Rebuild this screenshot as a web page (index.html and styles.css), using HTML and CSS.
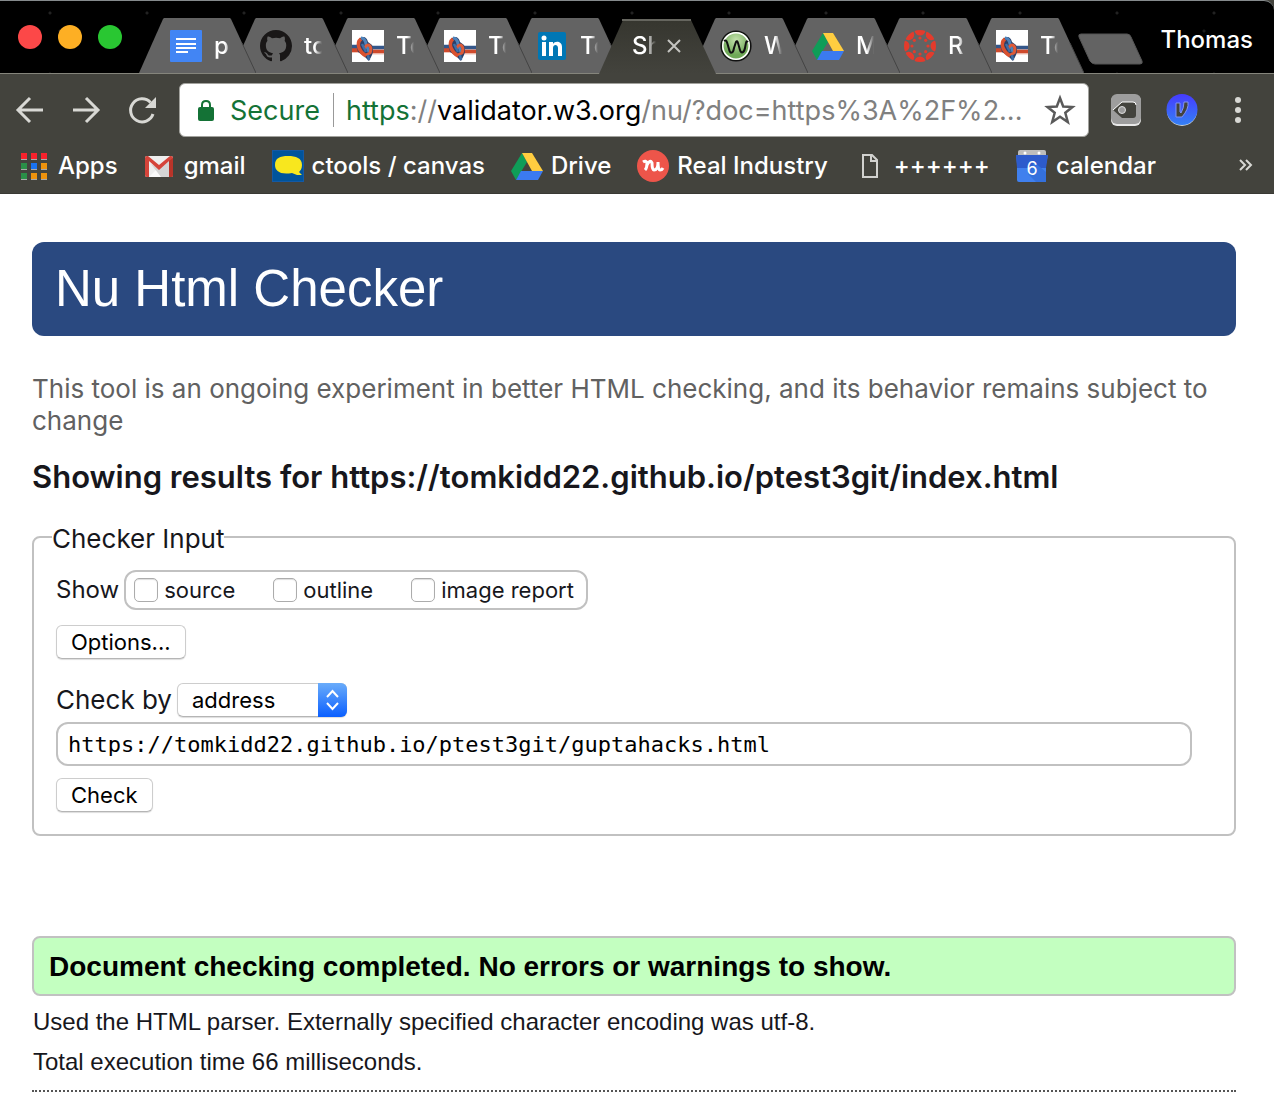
FILE: index.html
```html
<!DOCTYPE html>
<html lang="en">
<head>
<meta charset="utf-8">
<title>Showing results - Nu Html Checker</title>
<link rel="stylesheet" href="styles.css">
</head>
<body>
<svg class="defs" aria-hidden="true">
  <symbol id="tab-shape" viewBox="0 0 117 55"><path d="M0 55 24 1 25 0H91L92 1 117 55Z" fill="#636363"/><path d="M103 25 117 55" stroke="#444" fill="none"/></symbol>
  <symbol id="knot" viewBox="0 0 32 32">
    <rect width="32" height="32" fill="#fff"/>
    <path d="M0 20H10M17 21.500H32" stroke="#cf4a2c" stroke-width="4"/>
    <path d="M0 16.500H10M17 17.500H32" stroke="#34578a" stroke-width="3.500"/>
    <path d="M0 22.500H8M20 24H32" stroke="#f2c4b8" stroke-width="1"/>
    <path d="M8 8Q14 5 16 12L20 15Q22 20 20 25L17 31 12 26 6 22Q3 14 8 8Z" fill="#2c3f68"/>
    <path d="M9 9Q5 12 7 18 9 23 14 26" stroke="#d9512f" stroke-width="3.500" fill="none"/>
    <path d="M9 8Q13 8 14 14L17 22" stroke="#4d82ba" stroke-width="3" fill="none"/>
    <path d="M12 19Q15 13 18 16 20 19 18 23L14 25" stroke="#de5a38" stroke-width="3" fill="none"/>
    <path d="M10 14 14 22M16 25 17 30" stroke="#3d6ea6" stroke-width="2.500" fill="none"/>
  </symbol>
  <symbol id="drive" viewBox="0 0 32 32">
    <path d="M11 3 0 21 5 30 16 12Z" fill="#0f9d58"/>
    <path d="M11 3H21L32 21H21Z" fill="#ffcd40"/>
    <path d="M10 21H32L27 30H5Z" fill="#3b7af0"/>
  </symbol>
</svg>
<header class="browser">
  <div class="titlebar">
    <div class="lights">
      <button class="light red" aria-label="Close"></button>
      <button class="light amber" aria-label="Minimize"></button>
      <button class="light green" aria-label="Zoom"></button>
    </div>
    <nav class="tabs" aria-label="Tabs">
      <a class="tab" href="#"><svg class="shape"><use href="#tab-shape"/></svg>
        <svg class="icon" viewBox="0 0 32 32"><rect width="32" height="32" rx="1" fill="#4285f4"/><path d="M6 9H26M6 14H26M6 18H26M6 22H18" stroke="#fff" stroke-width="2"/></svg>
        <span class="label">p</span></a>
      <a class="tab" href="#"><svg class="shape"><use href="#tab-shape"/></svg>
        <svg class="icon" viewBox="0 0 16 16"><path fill="#191717" d="M8 0C3.580 0 0 3.580 0 8c0 3.540 2.290 6.530 5.470 7.590.4.070.55-.17.55-.38 0-.19-.01-.82-.01-1.490-2.010.37-2.530-.49-2.690-.94-.09-.23-.48-.94-.82-1.130-.28-.15-.68-.52-.01-.53.63-.01 1.080.58 1.230.82.72 1.210 1.870.87 2.330.66.070-.52.28-.87.51-1.070-1.780-.2-3.640-.89-3.640-3.950 0-.87.31-1.590.82-2.150-.08-.2-.36-1.020.08-2.120 0 0 .67-.21 2.200.82.64-.18 1.320-.27 2-.27s1.360.09 2 .27c1.530-1.040 2.200-.82 2.200-.82.44 1.100.16 1.920.08 2.120.51.56.82 1.270.82 2.150 0 3.070-1.870 3.750-3.650 3.950.29.25.54.73.54 1.480 0 1.070-.01 1.930-.01 2.200 0 .21.15.46.55.38A8 8 0 0 0 16 8c0-4.420-3.580-8-8-8z"/></svg>
        <span class="label">to</span></a>
      <a class="tab" href="#"><svg class="shape"><use href="#tab-shape"/></svg>
        <svg class="icon"><use href="#knot"/></svg><span class="label">To</span></a>
      <a class="tab" href="#"><svg class="shape"><use href="#tab-shape"/></svg>
        <svg class="icon"><use href="#knot"/></svg><span class="label">To</span></a>
      <a class="tab" href="#"><svg class="shape"><use href="#tab-shape"/></svg>
        <svg class="icon" viewBox="0 0 32 32"><rect x="2" y="2" width="28" height="28" rx="2" fill="#0077b5"/><circle cx="8" cy="8" r="2.500" fill="#fff"/><path d="M6 12H10V26H6ZM13 12H17V14C19 10.500 26 11 26 17V26H22V18C22 14 17 14 17 18V26H13Z" fill="#fff"/></svg>
        <span class="label">To</span></a>
      <a class="tab active" href="#" aria-current="page"><svg class="shape" viewBox="0 0 117 56"><defs><linearGradient id="act" x2="0" y2="1"><stop stop-color="#36362f"/><stop offset="1" stop-color="#43433d"/></linearGradient></defs><path d="M0 56 24 2H92L117 56Z" fill="url(#act)"/><path d="M23 2H92" stroke="#66665f" stroke-width="2"/></svg>
        <span class="label">Sh</span>
        <svg class="close" viewBox="0 0 14 14"><path d="M1 1 13 13M13 1 1 13" stroke="#c4c4c0" stroke-width="2"/></svg></a>
      <a class="tab" href="#"><svg class="shape"><use href="#tab-shape"/></svg>
        <svg class="icon" viewBox="0 0 32 32"><defs><radialGradient id="wg" cy=".3"><stop stop-color="#c4e2ad"/><stop offset="1" stop-color="#6fa957"/></radialGradient></defs><circle cx="16" cy="16" r="14.800" fill="url(#wg)" stroke="#111" stroke-width="1.600"/><circle cx="16" cy="16" r="13.200" fill="none" stroke="#fff" stroke-width="1.600"/><path d="M4 11C7 9 7 13 9 19 10 24 13 24 14 18L16 12Q17 10 18 13L20 20C21 24 24 23 25 18 26 13 26 10 28 12" fill="none" stroke="#111" stroke-width="2"/></svg>
        <span class="label">W</span></a>
      <a class="tab" href="#"><svg class="shape"><use href="#tab-shape"/></svg>
        <svg class="icon"><use href="#drive"/></svg><span class="label">M</span></a>
      <a class="tab" href="#"><svg class="shape"><use href="#tab-shape"/></svg>
        <svg class="icon" viewBox="0 0 32 32"><defs><clipPath id="ring"><circle cx="16" cy="16" r="16"/></clipPath></defs><g fill="#e43b2c"><g clip-path="url(#ring)"><circle cx="16" cy="0" r="5.500"/><circle cx="27.300" cy="4.700" r="5.500"/><circle cx="32" cy="16" r="5.500"/><circle cx="27.300" cy="27.300" r="5.500"/><circle cx="16" cy="32" r="5.500"/><circle cx="4.700" cy="27.300" r="5.500"/><circle cx="0" cy="16" r="5.500"/><circle cx="4.700" cy="4.700" r="5.500"/></g><circle cx="16" cy="8" r="1.600"/><circle cx="24" cy="16" r="1.600"/><circle cx="16" cy="24" r="1.600"/><circle cx="8" cy="16" r="1.600"/><circle cx="10.300" cy="10.300" r="1.600"/><circle cx="21.700" cy="10.300" r="1.600"/><circle cx="10.300" cy="21.700" r="1.600"/><circle cx="21.700" cy="21.700" r="1.600"/></g></svg>
        <span class="label">R</span></a>
      <a class="tab" href="#"><svg class="shape"><use href="#tab-shape"/></svg>
        <svg class="icon"><use href="#knot"/></svg><span class="label">To</span></a>
    </nav>
    <button class="newtab" aria-label="New tab"><svg viewBox="0 0 66 32"><path d="M3 1H49Q52 1 53 4L64 28Q65 31 62 31H17Q14 31 12 28L1 4Q0 1 3 1Z" fill="#636363" stroke="#555"/></svg></button>
    <button class="profile">Thomas</button>
  </div>
  <div class="toolbar">
    <button class="tool" aria-label="Back"><svg viewBox="0 0 32 32"><path d="M29 16H5M16 4 4 16 16 28" /></svg></button>
    <button class="tool" aria-label="Forward"><svg viewBox="0 0 32 32"><path d="M3 16H27M16 4 28 16 16 28"/></svg></button>
    <button class="tool" aria-label="Reload"><svg viewBox="0 0 32 32"><path d="M27 20A11.500 11.500 0 1 1 24.500 8.500"/><path d="M30 3V14H19Z" class="solid"/></svg></button>
    <div class="omnibox">
      <svg class="lock" viewBox="0 0 16 22"><rect y="8" width="16" height="14" rx="2" fill="#147236"/><path d="M4 9V6Q4 2 8 2T12 6V9" fill="none" stroke="#147236" stroke-width="2"/></svg>
      <span class="secure">Secure</span>
      <div class="url" role="textbox" aria-label="Address"><span class="scheme">https</span>://<span class="host">validator.w3.org</span>/nu/?doc=https%3A%2F%2...</div>
      <button class="star" aria-label="Bookmark this page"><svg viewBox="0 0 32 32"><path d="M16 4 19.200 12.500 28.500 13 21.300 18.800 23.800 28 16 22.800 8.200 28 10.700 18.800 3.500 13 12.800 12.500Z" fill="none" stroke="#5a5a5a" stroke-width="2.500"/></svg></button>
    </div>
    <button class="tool" aria-label="Tag extension"><svg viewBox="0 0 32 32"><rect x="1" y="1" width="30" height="31" rx="6" class="tagbase"/><rect x="1" y="0" width="30" height="30" rx="6" class="tagface"/><path d="M3 16 12 8H23Q26 8 26 11V21Q26 24 23 24H12Z" class="tagmark"/><path d="M3 16 12 8H23Q26 8 26 11" class="tagedge"/><circle cx="12" cy="16" r="3.500" class="taghole"/></svg></button>
    <button class="tool" aria-label="Venmo"><svg viewBox="0 0 32 32"><defs><linearGradient id="ven" x2="0" y2="1"><stop stop-color="#463bff"/><stop offset="1" stop-color="#3480f5"/></linearGradient></defs><circle cx="16" cy="17" r="15" class="vshadow"/><circle cx="16" cy="15.500" r="15.500" class="vface"/><path d="M10 9H14V18L15 19Q18 14 18 8H22Q23 15 16 23H10Z" class="vmark"/></svg></button>
    <button class="tool" aria-label="Menu"><svg viewBox="0 0 32 32"><g class="solid"><circle cx="16" cy="6" r="3"/><circle cx="16" cy="16" r="3"/><circle cx="16" cy="26" r="3"/></g></svg></button>
  </div>
  <nav class="bookmarks" aria-label="Bookmarks">
    <a href="#"><svg viewBox="0 0 32 32"><path d="M3 9h6v1H3zM13 9h6v1h-6zM23 9h6v1h-6zM3 19h6v1H3zM13 19h6v1h-6zM23 19h6v1h-6zM3 29h6v1H3zM13 29h6v1h-6zM23 29h6v1h-6z" fill="#aaa"/><path d="M3 3h6v6H3zM13 3h6v6h-6zM23 3h6v6h-6z" fill="#f6222c"/><path d="M3 13h6v6H3zM3 23h6v6H3z" fill="#2a9048"/><path d="M13 13h6v6h-6z" fill="#1a73f0"/><path d="M23 13h6v6h-6zM13 23h6v6h-6zM23 23h6v6h-6z" fill="#ee920c"/></svg>Apps</a>
    <a href="#"><svg viewBox="0 0 32 32"><rect x="1" y="6" width="28" height="21" rx="2" fill="#eee"/><path d="M5 27 15 17 25 27Z" fill="#fafafa"/><path d="M15 18 25 9V27H17L7 14Z" fill="#d5d5d5"/><path d="M1 8V25Q1 27 3 27H5V11L15 20 25 11V27H27Q29 27 29 25V8Q29 6 27 6H26L15 15 4 6H3Q1 6 1 8Z" fill="#d5443a"/><path d="M25 11 29 8V25Q29 27 27 27H25Z" fill="#b93429"/></svg>gmail</a>
    <a href="#"><svg viewBox="0 0 32 32"><rect width="32" height="32" fill="#1459a5"/><rect x="1" y="1" width="30" height="30" fill="#00549c"/><path d="M3 15C3 8 8 6 16 6S30 8 30 15C30 19 28 21 27 22L30 25H25L20 23C8 25 3 21 3 15Z" fill="#f8e71e"/></svg>ctools / canvas</a>
    <a href="#"><svg><use href="#drive"/></svg>Drive</a>
    <a href="#"><svg viewBox="0 0 32 32"><circle cx="16" cy="16" r="16" fill="#ed554a"/><path d="M6 12Q9 10 10 13 10 18 8 20M10 15Q13 9 15 13 15 20 17 20 21 20 21 12M21 12Q21 20 23 20 25 20 26 18" fill="none" stroke="#fff" stroke-width="3"/></svg>Real Industry</a>
    <a href="#"><svg viewBox="0 0 32 32"><path d="M9 5H18L23 10V27H9ZM17 5V11H23" fill="none" stroke="#d2d2cf" stroke-width="2"/></svg>++++++</a>
    <a href="#"><svg viewBox="0 0 32 32"><path d="M2 2Q2 0 4 0H28Q30 0 30 2V6H2Z" fill="#bdbdbd"/><circle cx="9" cy="3" r="1.500" fill="#fff"/><circle cx="23" cy="3" r="1.500" fill="#fff"/><path d="M0 5H32L30 14V30Q30 32 28 32H3Q1 32 1 30V14Z" fill="#4080ee"/><path d="M0 5H32L30 18H1Z" fill="#2d5bcc"/><path d="M18 12 30 22V32H20L12 24Z" fill="#3470dc"/><text x="16" y="25" text-anchor="middle" class="day">6</text></svg>calendar</a>
    <button class="more" aria-label="More bookmarks"><svg viewBox="0 0 16 16"><path d="M2 2 7 7 2 12M8 2 13 7 8 12"/></svg></button>
  </nav>
</header>
<main class="page">
  <h1>Nu Html Checker</h1>
  <p class="intro">This tool is an ongoing experiment in better HTML checking, and its behavior remains subject to change</p>
  <h2>Showing results for https://tomkidd22.github.io/ptest3git/index.html</h2>
  <form>
    <fieldset class="checker">
      <legend>Checker Input</legend>
      <div class="show">
        <span>Show</span>
        <div class="choices">
          <label><input type="checkbox">source</label>
          <label><input type="checkbox">outline</label>
          <label><input type="checkbox">image report</label>
        </div>
      </div>
      <button class="push" type="button">Options...</button>
      <div class="method">
        <label for="by">Check by</label>
        <div class="select">
          <select id="by"><option>address</option></select>
          <svg viewBox="0 0 29 34"><path d="M9 14 14.500 8 20 14M9 20 14.500 26 20 20"/></svg>
        </div>
      </div>
      <input class="address" type="text" aria-label="Address" value="https://tomkidd22.github.io/ptest3git/guptahacks.html" spellcheck="false">
      <button class="push" type="button">Check</button>
    </fieldset>
  </form>
  <p class="success">Document checking completed. No errors or warnings to show.</p>
  <div class="details">
    <p>Used the HTML parser. Externally specified character encoding was utf-8.</p>
    <p>Total execution time 66 milliseconds.</p>
  </div>
</main>
</body>
</html>
```
FILE: styles.css
```css
* { box-sizing: border-box; }
body {
  margin: 0;
  background: #fff;
  color: #17171c;
  font-family: Inter, "Liberation Sans", sans-serif;
}
h1, h2, p { margin: 0; }
button { border: 0; padding: 0; background: none; font: inherit; color: inherit; }
svg { display: block; }
a { color: inherit; text-decoration: none; }
.defs { position: absolute; width: 0; height: 0; }

/* Browser frame */
.browser { background: #43433d; color: #fff; border-bottom: 1px solid #393934; }
.titlebar {
  display: flex;
  align-items: center;
  height: 74px;
  padding: 0 21px 0 18px;
  border-top: 1px solid #858a8c;
  border-bottom: 1px solid #85857c;
  border-radius: 0 10px 0 0;
  background:
    radial-gradient(circle at 20px 20px, #222 1px, transparent 2px) 30px -8px / 97px 61px,
    radial-gradient(circle at 60px 30px, #1c1c1c 1px, transparent 2px) 0 0 / 143px 47px,
    #000;
}
.lights { display: flex; gap: 16px; margin-right: 17px; }
.light { width: 24px; height: 24px; border-radius: 50%; }
.red { background: #fc4848; }
.amber { background: #fdaf24; }
.green { background: #29c732; }
.tabs { display: flex; align-self: flex-end; isolation: isolate; }
.tab {
  position: relative;
  display: flex;
  align-items: center;
  gap: 12px;
  width: 117px;
  height: 55px;
  margin-right: -25px;
  padding-left: 29px;
}
.tab:nth-child(1) { z-index: 9; padding-left: 31px; }
.tab:nth-child(2) { z-index: 8; }
.tab:nth-child(3) { z-index: 7; }
.tab:nth-child(4) { z-index: 6; }
.tab:nth-child(5) { z-index: 5; }
.tab:nth-child(6) { z-index: 10; }
.tab:nth-child(7) { z-index: 4; }
.tab:nth-child(8) { z-index: 3; }
.tab:nth-child(9) { z-index: 2; }
.shape { position: absolute; inset: 0; width: 117px; height: 55px; z-index: -1; }
.active .shape { height: 56px; }
.icon { flex: none; width: 32px; height: 32px; }
.label {
  width: 18px;
  overflow: hidden;
  white-space: nowrap;
  font-size: 24px;
  font-weight: 500;
  line-height: 32px;
  -webkit-mask-image: linear-gradient(90deg, #000 60%, transparent);
  mask-image: linear-gradient(90deg, #000 60%, transparent);
}
.tab.active { gap: 11px; padding-left: 33px; }
.active .label { width: 24px; }
.close { width: 14px; height: 14px; }
.newtab { align-self: flex-start; width: 66px; height: 32px; margin: 32px 0 0 19px; }
.profile { margin-left: auto; padding-top: 5px; font-size: 24px; font-weight: 500; line-height: 32px; }

.toolbar { display: flex; align-items: center; gap: 24px; height: 72px; padding: 0 20px 0 14px; }
.tool, .tool svg { width: 32px; height: 32px; }
.tool { flex: none; }
.tool svg { fill: none; stroke: #d8d8d4; stroke-width: 3; }
.tool .solid { fill: #d8d8d4; stroke: none; }
.tool .tagbase { fill: #e8e8e8; stroke: none; }
.tool .tagface { fill: #9d9d9d; stroke: none; }
.tool .tagmark { fill: #43433d; stroke: none; }
.tool .tagedge { stroke: #fff; stroke-width: 1; }
.tool .taghole { fill: #9d9d9d; stroke: #ddd; stroke-width: 1; }
.tool .vshadow { fill: #ccd4dd; stroke: none; }
.tool .vface { fill: url(#ven); stroke: none; }
.tool .vmark { fill: #43433d; stroke: #8292f5; stroke-width: 1; }
.omnibox {
  display: flex;
  align-items: center;
  flex: 1;
  min-width: 0;
  height: 54px;
  margin: 0 -3px;
  padding: 0 12px 0 18px;
  border: 1px solid #a2a29d;
  border-radius: 6px;
  background: #fff;
  font-size: 27px;
  line-height: 32px;
}
.lock { flex: none; width: 16px; height: 22px; }
.secure, .url { padding-top: 2px; }
.secure { margin-left: 16px; padding-right: 13px; border-right: 1px solid #999; color: #147236; }
.url { flex: 1; min-width: 0; padding-left: 12px; overflow: hidden; white-space: nowrap; color: #808080; }
.scheme { color: #147236; }
.host { color: #000; }
.star, .star svg { width: 32px; height: 32px; }

.bookmarks {
  display: flex;
  align-items: center;
  gap: 26px;
  height: 47px;
  padding: 0 20px 8px 18px;
  font-size: 24px;
  font-weight: 500;
  line-height: 32px;
  white-space: nowrap;
}
.bookmarks a { display: flex; align-items: center; gap: 8px; }
.bookmarks a svg { width: 32px; height: 32px; }
.day { fill: #fff; font-size: 18px; font-weight: 400; }
.more { margin-left: auto; }
.more svg { width: 16px; height: 16px; fill: none; stroke: #d8d8d4; stroke-width: 2; }

/* Page */
.page { padding: 48px 38px 12px 32px; }
h1 {
  padding: 17px 23px;
  border-radius: 12px;
  background: #2a4980;
  color: #fff;
  font: 51px/60px "Liberation Sans", Arial, sans-serif;
}
.intro { margin-top: 37px; color: #616161; font-size: 26px; line-height: 32px; }
h2 { margin-top: 20px; font-size: 31px; font-weight: 600; line-height: 40px; }
.checker {
  margin: 25px 0 0;
  min-width: 0;
  padding: 18px 42px 22px 22px;
  border: 2px solid #c1c1c1;
  border-radius: 8px;
}
legend { margin-left: -4px; padding: 4px 0 0; font-size: 26px; line-height: 26px; }
.show { display: flex; align-items: center; gap: 5px; font-size: 24px; line-height: 32px; }
.choices {
  display: flex;
  gap: 38px;
  padding: 2px 12px 2px 8px;
  border: 2px solid #c1c1c1;
  border-radius: 12px;
  font-size: 22px;
}
.choices label { display: flex; align-items: center; gap: 6px; }
.choices input {
  appearance: none;
  width: 24px;
  height: 24px;
  margin: 0;
  border: 1px solid #acacac;
  border-radius: 5px;
  background: #fff;
  box-shadow: inset 0 1px 1px #ddd;
}
.push {
  display: block;
  height: 34px;
  margin-top: 15px;
  padding: 0 14px;
  border: 1px solid #cdcdcd;
  border-bottom-color: #b5b5b5;
  border-radius: 6px;
  background: #fff;
  box-shadow: 0 1px 1px #ddd;
  color: #000;
  font-size: 22px;
  line-height: 32px;
}
.method { display: flex; align-items: center; gap: 5px; margin-top: 24px; font-size: 26px; line-height: 32px; }
.select { position: relative; }
.select select {
  appearance: none;
  display: block;
  width: 170px;
  height: 34px;
  padding: 0 40px 0 14px;
  border: 1px solid #cdcdcd;
  border-bottom-color: #b5b5b5;
  border-radius: 6px;
  background: #fff;
  box-shadow: 0 1px 1px #ddd;
  color: #000;
  font: 22px/32px Inter, sans-serif;
}
.select svg {
  position: absolute;
  top: 0;
  right: 0;
  width: 29px;
  height: 34px;
  border-radius: 0 6px 6px 0;
  background: linear-gradient(#6aacfa, #0a5fff);
  fill: none;
  stroke: #fff;
  stroke-width: 2;
  pointer-events: none;
}
.address {
  display: block;
  width: 100%;
  height: 44px;
  margin-top: 5px;
  padding: 0 10px;
  border: 2px solid #c1c1c1;
  border-radius: 12px;
  background: #fff;
  color: #000;
  font: 22px "DejaVu Sans Mono", monospace;
}
.address + .push { margin-top: 12px; }
.success {
  margin-top: 100px;
  padding: 13px 15px 11px;
  border: 2px solid #c1c1c1;
  border-radius: 8px;
  background: #c3ffc0;
  color: #000;
  font: bold 28px/32px "Liberation Sans", Arial, sans-serif;
}
.details {
  padding: 6px 1px 8px;
  border-bottom: 2px dotted #555;
  font: 24px/40px "Liberation Sans", Arial, sans-serif;
}
```
